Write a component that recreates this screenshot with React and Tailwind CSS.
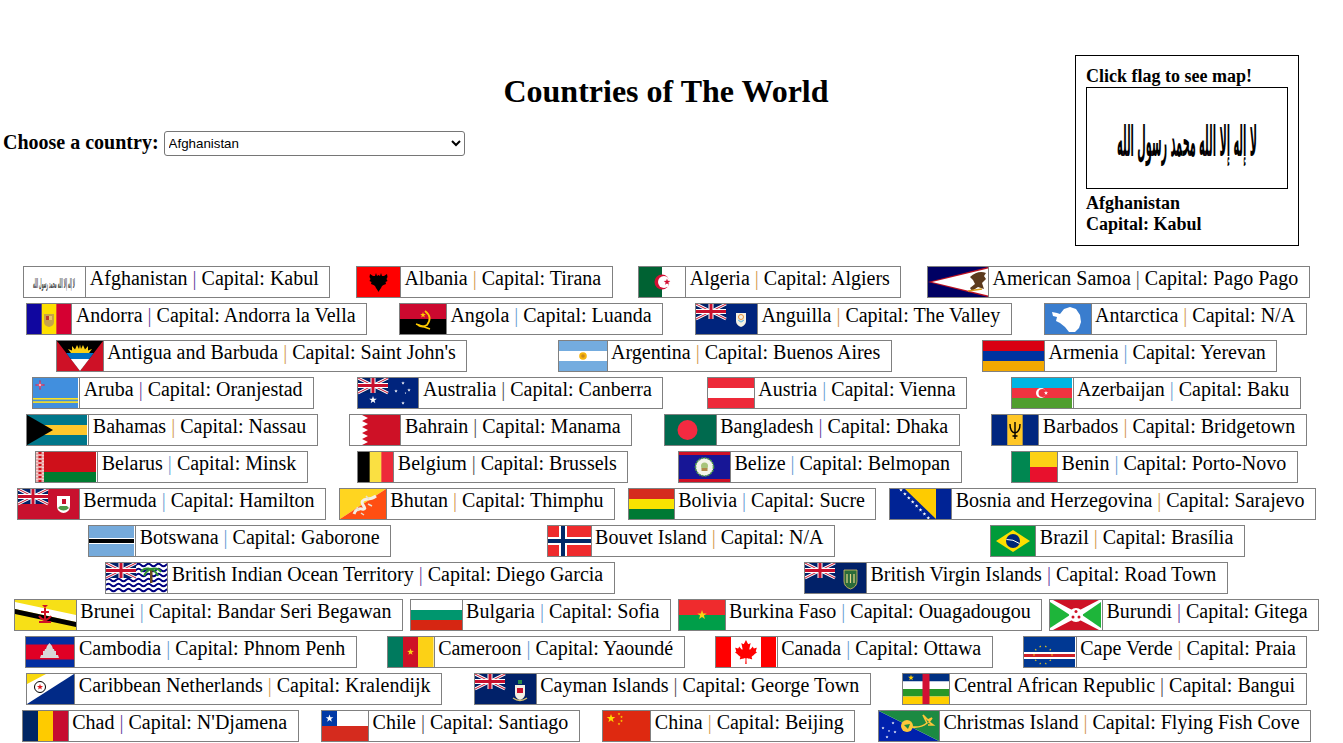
import React from "react";
import { FaCanadianMapleLeaf } from "react-icons/fa";

// =========================
// Flag helpers
// =========================
const Star = ({ x, y, r, fill = "#fff" }) => {
  const pts = [];
  for (let i = 0; i < 10; i++) {
    const rad = i % 2 === 0 ? r : r * 0.4;
    const a = (Math.PI / 5) * i - Math.PI / 2;
    pts.push(`${x + rad * Math.cos(a)},${y + rad * Math.sin(a)}`);
  }
  return <polygon points={pts.join(" ")} fill={fill} />;
};

const Jack = () => (
  <g>
    <rect width="30" height="15" fill="#012169" />
    <path d="M0 0L30 15M30 0L0 15" stroke="#fff" strokeWidth="3" />
    <path d="M0 0L30 15M30 0L0 15" stroke="#c8102e" strokeWidth="1" />
    <path d="M15 0V15M0 7.5H30" stroke="#fff" strokeWidth="5" />
    <path d="M15 0V15M0 7.5H30" stroke="#c8102e" strokeWidth="3" />
  </g>
);

const Stripes = ({ w, colors }) => (
  <>
    {colors.map((c, i) => (
      <rect key={i} y={(30 / colors.length) * i} width={w} height={30 / colors.length} fill={c} />
    ))}
  </>
);

const Bars = ({ colors, w }) => (
  <>
    {colors.map((c, i) => (
      <rect key={i} x={(w / colors.length) * i} width={w / colors.length + 0.5} height="30" fill={c} />
    ))}
  </>
);

const Shahada = () => (
  <text
    x="30"
    y="20.5"
    fontFamily="'DejaVu Sans', sans-serif"
    fontWeight="700"
    fontSize="12.5"
    textAnchor="middle"
    textLength="42"
    lengthAdjust="spacingAndGlyphs"
    fill="#000"
  >
    لا إله إلا الله محمد رسول الله
  </text>
);

// =========================
// Country data: name, capital, flag width, separator tint, art
// =========================
const P = "#6b4aa0";
const O = "#d49a55";
const B = "#6f9fd4";
const K = "#555555";

const countries = [
  { name: "Afghanistan", cap: "Kabul", w: 61, sep: P, art: <g opacity="0.75"><rect width="61" height="30" fill="#fff" /><Shahada /></g> },
  {
    name: "Albania", cap: "Tirana", w: 43, sep: O,
    art: (
      <>
        <rect width="43" height="30" fill="#ff0000" />
        <path d="M19 6L20 9L21.5 8L23 9L24 6L25 9L27 9L30 7L30.5 10L29.5 12L30.5 14L28.5 15L29 17L26.5 18L25 19L24 21L22 24L21.5 25L21 24L19 21L18 19L16.5 18L14 17L14.5 15L12.5 14L13.5 12L12.5 10L13 7L16 9L18 9Z" fill="#000" />
      </>
    ),
  },
  {
    name: "Algeria", cap: "Algiers", w: 46, sep: O,
    art: (
      <>
        <rect width="46" height="30" fill="#fff" />
        <rect width="23" height="30" fill="#006233" />
        <circle cx="23" cy="15" r="7.5" fill="#d21034" />
        <circle cx="25" cy="15" r="6" fill="#fff" />
        <Star x={28} y={15} r={3.5} fill="#d21034" />
      </>
    ),
  },
  {
    name: "American Samoa", cap: "Pago Pago", w: 60, sep: K,
    art: (
      <>
        <rect width="60" height="30" fill="#000063" />
        <polygon points="0,15 60,0 60,30" fill="#bd1021" />
        <polygon points="4,15 60,1.5 60,28.5" fill="#fff" />
        <path d="M42 10Q50 3 58 6L56 9L58 12L54 16L56 22L50 20L44 24L42 21L47 17L45 13Z" fill="#5c3a1e" />
        <path d="M40 24L54 22" stroke="#d8a020" strokeWidth="1.5" />
      </>
    ),
  },
  {
    name: "Andorra", cap: "Andorra la Vella", w: 44, sep: P,
    art: (
      <>
        <Bars w={44} colors={["#10069f", "#fedf00", "#d50032"]} />
        <path d="M17 10H27V18Q27 22 22 23Q17 22 17 18Z" fill="#c7a24a" />
        <rect x="19" y="12" width="3" height="4" fill="#c0392b" />
        <rect x="22" y="12" width="3" height="4" fill="#e8c86a" />
      </>
    ),
  },
  {
    name: "Angola", cap: "Luanda", w: 46, sep: B,
    art: (
      <>
        <rect width="46" height="15" fill="#cc092f" />
        <rect y="15" width="46" height="15" fill="#000" />
        <path d="M25 7Q33 13 27 21Q22 24 18 21" stroke="#ffcb00" strokeWidth="1.8" fill="none" />
        <path d="M16 20L30 25" stroke="#ffcb00" strokeWidth="1.4" />
        <Star x={23} y={11} r={3} fill="#ffcb00" />
      </>
    ),
  },
  {
    name: "Anguilla", cap: "The Valley", w: 61, sep: O,
    art: (
      <>
        <rect width="61" height="30" fill="#00247d" />
        <Jack />
        <path d="M40 9H50V17Q50 21 45 23Q40 21 40 17Z" fill="#f4f1e4" />
        <path d="M42 16Q45 20 48 16Q45 19 42 16Z" fill="#7fc4e8" stroke="#7fc4e8" />
        <circle cx="45" cy="13" r="2.5" fill="none" stroke="#e8923c" />
      </>
    ),
  },
  {
    name: "Antarctica", cap: "N/A", w: 46, sep: O,
    art: (
      <>
        <rect width="46" height="30" fill="#3a7dce" />
        <path d="M7 8L12 9L15 10L19 5L25 3L31 5L35 11L36 18L34 24L30 28L24 28L20 23L15 19L11 17L12 13L8 12Z" fill="#fff" />
      </>
    ),
  },
  {
    name: "Antigua and Barbuda", cap: "Saint John's", w: 46, sep: O,
    art: (
      <>
        <rect width="46" height="30" fill="#ce1126" />
        <polygon points="0,0 46,0 23,30" fill="#000" />
        <path d="M14 12L11 8L15 9.5L15 5L18 8.5L20 4L22 8L23 3.5L24 8L26 4L28 8.5L31 5L31 9.5L35 8L32 12Z" fill="#fcd116" />
        <polygon points="9.2,12 36.8,12 32.2,18 13.8,18" fill="#0072c6" />
        <polygon points="13.8,18 32.2,18 23,30" fill="#fff" />
      </>
    ),
  },
  {
    name: "Argentina", cap: "Buenos Aires", w: 48, sep: O,
    art: (
      <>
        <Stripes w={48} colors={["#74acdf", "#fff", "#74acdf"]} />
        <circle cx="24" cy="15" r="3.8" fill="#f6b40e" />
        <circle cx="24" cy="15" r="1.8" fill="#c98a1c" />
      </>
    ),
  },
  { name: "Armenia", cap: "Yerevan", w: 61, sep: B, art: <Stripes w={61} colors={["#d90012", "#0033a0", "#f2a800"]} /> },
  {
    name: "Aruba", cap: "Oranjestad", w: 46, sep: P,
    art: (
      <>
        <rect width="46" height="30" fill="#fff" />
        <rect width="45" height="30" fill="#418fde" />
        <rect y="20" width="45" height="1.6" fill="#fbe122" />
        <rect y="23.3" width="45" height="1.6" fill="#fbe122" />
        <path d="M7 2.5L7.7 6.3L11.5 7L7.7 7.7L7 11.5L6.3 7.7L2.5 7L6.3 6.3Z" fill="#fff" stroke="#e4002b" strokeWidth="0.6" />
      </>
    ),
  },
  {
    name: "Australia", cap: "Canberra", w: 60, sep: K,
    art: (
      <>
        <rect width="60" height="30" fill="#00247d" />
        <Jack />
        <Star x={15} y={22} r={4} />
        <Star x={45} y={5} r={1.8} />
        <Star x={51} y={12} r={1.8} />
        <Star x={38} y={13} r={1.8} />
        <Star x={45} y={25} r={1.8} />
        <Star x={47.5} y={15} r={1} />
      </>
    ),
  },
  { name: "Austria", cap: "Vienna", w: 46, sep: B, art: <Stripes w={46} colors={["#ed2939", "#fff", "#ed2939"]} /> },
  {
    name: "Azerbaijan", cap: "Baku", w: 61, sep: B,
    art: (
      <>
        <rect width="61" height="30" fill="#fff" />
        <Stripes w={60} colors={["#00b5e2", "#ef3340", "#509e2f"]} />
        <rect x="60" width="1" height="30" fill="#fff" />
        <circle cx="29" cy="15" r="5" fill="#fff" />
        <circle cx="30.5" cy="15" r="4" fill="#ef3340" />
        <Star x={34} y={15} r={2.2} />
      </>
    ),
  },
  {
    name: "Bahamas", cap: "Nassau", w: 61, sep: O,
    art: (
      <>
        <rect width="61" height="30" fill="#fff" />
        <Stripes w={60} colors={["#00778b", "#ffc72c", "#00778b"]} />
        <rect x="60" width="1" height="30" fill="#fff" />
        <polygon points="0,0 26,15 0,30" fill="#000" />
      </>
    ),
  },
  {
    name: "Bahrain", cap: "Manama", w: 50, sep: K,
    art: (
      <>
        <rect width="50" height="30" fill="#fff" />
        <polygon points="50,0 12,0 18,3 12,6 18,9 12,12 18,15 12,18 18,21 12,24 18,27 12,30 50,30" fill="#ce1126" />
      </>
    ),
  },
  {
    name: "Bangladesh", cap: "Dhaka", w: 51, sep: P,
    art: (
      <>
        <rect width="51" height="30" fill="#006a4e" />
        <circle cx="22.5" cy="15" r="10" fill="#f42a41" />
      </>
    ),
  },
  {
    name: "Barbados", cap: "Bridgetown", w: 46, sep: O,
    art: (
      <>
        <Bars w={46} colors={["#00267f", "#ffc726", "#00267f"]} />
        <path d="M18 9Q18 17 23 18Q28 17 28 9M23 7V24M20.5 21H25.5" stroke="#000" strokeWidth="1.4" fill="none" />
      </>
    ),
  },
  {
    name: "Belarus", cap: "Minsk", w: 61, sep: B,
    art: (
      <>
        <rect width="61" height="30" fill="#fff" />
        <rect x="8" width="52" height="20" fill="#cf101a" />
        <rect x="8" y="20" width="52" height="10" fill="#007c30" />
        <rect width="8" height="30" fill="#e9a7a7" />
        <path d="M4 0V30" stroke="#cf101a" strokeWidth="3" strokeDasharray="2 2" />
        <path d="M1 0V30M7 0V30" stroke="#fff" strokeWidth="1" strokeDasharray="1 2" />
      </>
    ),
  },
  { name: "Belgium", cap: "Brussels", w: 35, sep: K, art: <Bars w={35} colors={["#000", "#fae042", "#ed2939"]} /> },
  {
    name: "Belize", cap: "Belmopan", w: 51, sep: B,
    art: (
      <>
        <rect width="51" height="30" fill="#ce1126" />
        <rect y="3" width="51" height="24" fill="#171696" />
        <circle cx="25.5" cy="15" r="9" fill="#f4f4ea" />
        <circle cx="25.5" cy="15" r="9" fill="none" stroke="#4f9a4a" strokeWidth="1.6" strokeDasharray="2 1" />
        <circle cx="25.5" cy="14" r="3.5" fill="#a8c47a" />
        <rect x="22.5" y="16" width="6" height="3" fill="#b0894a" />
      </>
    ),
  },
  {
    name: "Benin", cap: "Porto-Novo", w: 45, sep: B,
    art: (
      <>
        <rect width="18" height="30" fill="#008751" />
        <rect x="18" width="27" height="15" fill="#fcd116" />
        <rect x="18" y="15" width="27" height="15" fill="#e8112d" />
      </>
    ),
  },
  {
    name: "Bermuda", cap: "Hamilton", w: 61, sep: B,
    art: (
      <>
        <rect width="61" height="30" fill="#c8102e" />
        <Jack />
        <path d="M39 7H52V17Q52 23 45.5 24Q39 23 39 17Z" fill="#fff" />
        <rect x="44" y="10" width="4" height="5" fill="#c8102e" />
        <path d="M40 19Q45.5 24 51 19L49 17H42Z" fill="#4f9a4a" />
      </>
    ),
  },
  {
    name: "Bhutan", cap: "Thimphu", w: 46, sep: O,
    art: (
      <>
        <polygon points="0,0 46,0 0,30" fill="#ffd520" />
        <polygon points="46,0 46,30 0,30" fill="#ff4e12" />
        <path d="M14 25Q16 19 22 20Q27 21 23 16Q20 11 27 10Q32 10 36 7" stroke="#f4efe6" strokeWidth="3" fill="none" />
        <path d="M17 18L19 22M28 15L32 17M26 7L29 10M21 24L24 26" stroke="#e8e0d0" strokeWidth="1.5" />
      </>
    ),
  },
  { name: "Bolivia", cap: "Sucre", w: 45, sep: B, art: <Stripes w={45} colors={["#d52b1e", "#f9e300", "#007934"]} /> },
  {
    name: "Bosnia and Herzegovina", cap: "Sarajevo", w: 61, sep: O,
    art: (
      <>
        <rect width="61" height="30" fill="#002395" />
        <polygon points="15,0 46,0 46,30" fill="#fecb00" />
        {[0, 1, 2, 3, 4, 5, 6, 7].map((i) => (
          <Star key={i} x={11 + i * 3.9} y={1 + i * 4} r={2} />
        ))}
      </>
    ),
  },
  {
    name: "Botswana", cap: "Gaborone", w: 46, sep: B,
    art: (
      <>
        <rect width="46" height="30" fill="#fff" />
        <rect width="45" height="30" fill="#75aadb" />
        <rect y="12" width="45" height="6" fill="#fff" />
        <rect y="13" width="45" height="4" fill="#000" />
      </>
    ),
  },
  {
    name: "Bouvet Island", cap: "N/A", w: 43, sep: O,
    art: (
      <>
        <rect width="43" height="30" fill="#ef2b2d" />
        <rect x="11" width="8" height="30" fill="#fff" />
        <rect y="11" width="43" height="8" fill="#fff" />
        <rect x="13" width="4" height="30" fill="#002868" />
        <rect y="13" width="43" height="4" fill="#002868" />
      </>
    ),
  },
  {
    name: "Brazil", cap: "Brasília", w: 44, sep: O,
    art: (
      <>
        <rect width="44" height="30" fill="#009b3a" />
        <polygon points="22,4 39,15 22,26 5,15" fill="#fedf00" />
        <circle cx="22" cy="15" r="7" fill="#002776" />
        <path d="M15.5 13.5Q22 13 28.5 17.5" stroke="#fff" strokeWidth="1" fill="none" />
      </>
    ),
  },
  {
    name: "British Indian Ocean Territory", cap: "Diego Garcia", w: 61, sep: P,
    art: (
      <>
        <rect width="61" height="30" fill="#fff" />
        {[2, 7, 12, 17, 22, 27].map((y) => (
          <path key={y} d={`M0 ${y}q2.5 -2.5 5 0t5 0t5 0t5 0t5 0t5 0t5 0t5 0t5 0t5 0t5 0t5 0t5 0`} stroke="#000080" strokeWidth="1.8" fill="none" />
        ))}
        <Jack />
        <rect x="44" y="6" width="2.5" height="14" fill="#6b4a20" />
        <path d="M45 6Q38 4 35 9M45 6Q52 4 55 9M45 6Q40 8 38 13M45 6Q50 8 52 13" stroke="#2f8f2f" strokeWidth="2" fill="none" />
      </>
    ),
  },
  {
    name: "British Virgin Islands", cap: "Road Town", w: 61, sep: P,
    art: (
      <>
        <rect width="61" height="30" fill="#012169" />
        <Jack />
        <path d="M39 7H52V18Q52 24 45.5 26Q39 24 39 18Z" fill="#2a6b3a" stroke="#e0c060" strokeWidth="0.8" />
        <path d="M42 11V20M45.5 11V20M49 11V20" stroke="#e8d48a" strokeWidth="1.2" />
      </>
    ),
  },
  {
    name: "Brunei", cap: "Bandar Seri Begawan", w: 61, sep: B,
    art: (
      <>
        <rect width="61" height="30" fill="#f7e017" />
        <polygon points="0,2 0,9 61,22 61,15" fill="#fff" />
        <polygon points="0,9 0,14 61,27 61,22" fill="#000" />
        <path d="M24 16Q30 24 36 16M30 8V22M26 12H34M24 22H36" stroke="#cf1126" strokeWidth="2" fill="none" />
        <path d="M27 5L30 8L33 5Z" fill="#cf1126" />
      </>
    ),
  },
  { name: "Bulgaria", cap: "Sofia", w: 51, sep: B, art: <Stripes w={51} colors={["#fff", "#00966e", "#d62612"]} /> },
  {
    name: "Burkina Faso", cap: "Ouagadougou", w: 46, sep: B,
    art: (
      <>
        <rect width="46" height="15" fill="#ef2b2d" />
        <rect y="15" width="46" height="15" fill="#009e49" />
        <Star x={23} y={15} r={5} fill="#fcd116" />
      </>
    ),
  },
  {
    name: "Burundi", cap: "Gitega", w: 52, sep: P,
    art: (
      <>
        <rect width="52" height="30" fill="#fff" />
        <polygon points="3,0 49,0 26,12" fill="#ce1126" />
        <polygon points="3,30 49,30 26,18" fill="#ce1126" />
        <polygon points="0,2 0,28 20,15" fill="#1eb53a" />
        <polygon points="51,2 51,28 32,15" fill="#1eb53a" />
        <circle cx="26" cy="15" r="7" fill="#fff" />
        <circle cx="26" cy="11.5" r="1.5" fill="#ce1126" />
        <circle cx="23" cy="17" r="1.5" fill="#ce1126" />
        <circle cx="29" cy="17" r="1.5" fill="#ce1126" />
      </>
    ),
  },
  {
    name: "Cambodia", cap: "Phnom Penh", w: 48, sep: B,
    art: (
      <>
        <rect width="48" height="30" fill="#032ea1" />
        <rect y="7.5" width="48" height="15" fill="#e00025" />
        <path d="M14 21L15 18H17L17 14H18.5L19 12H20L21 9L23.5 6L26 9L27 12H28L28.5 14H30L30 18H32L33 21Z" fill="#d8d8d8" />
      </>
    ),
  },
  {
    name: "Cameroon", cap: "Yaoundé", w: 46, sep: B,
    art: (
      <>
        <rect width="46" height="30" fill="#fff" />
        <Bars w={45} colors={["#007a5e", "#ce1126", "#fcd116"]} />
        <Star x={22.5} y={15} r={3.5} fill="#fcd116" />
      </>
    ),
  },
  {
    name: "Canada", cap: "Ottawa", w: 61, sep: B,
    art: (
      <>
        <rect width="61" height="30" fill="#fff" />
        <rect width="15" height="30" fill="#ff0000" />
        <rect x="45" width="15" height="30" fill="#ff0000" />
        <FaCanadianMapleLeaf x={18} y={3} size={24} color="#ff0000" />
      </>
    ),
  },
  {
    name: "Cape Verde", cap: "Praia", w: 52, sep: O,
    art: (
      <>
        <rect width="52" height="30" fill="#003893" />
        <rect y="15" width="52" height="7" fill="#fff" />
        <rect y="17" width="52" height="3" fill="#cf2027" />
        {[...Array(10)].map((_, i) => (
          <Star
            key={i}
            x={19 + 9 * Math.cos((i * Math.PI) / 5)}
            y={18 + 9 * Math.sin((i * Math.PI) / 5)}
            r={1.2}
            fill="#f7d116"
          />
        ))}
        <rect x="51" width="1" height="30" fill="#fff" />
      </>
    ),
  },
  {
    name: "Caribbean Netherlands", cap: "Kralendijk", w: 47, sep: O,
    art: (
      <>
        <rect width="47" height="30" fill="#fff" />
        <polygon points="0,0 19,0 0,10" fill="#f9d90f" />
        <polygon points="47,0 47,30 0,30" fill="#012a87" />
        <circle cx="13" cy="13" r="5.5" fill="#fff" stroke="#000" />
        <Star x={13} y={13} r={3.2} fill="#dc171d" />
      </>
    ),
  },
  {
    name: "Cayman Islands", cap: "George Town", w: 61, sep: K,
    art: (
      <>
        <rect width="61" height="30" fill="#012169" />
        <Jack />
        <path d="M40 11H50V20Q50 24 45 26Q40 24 40 20Z" fill="#f4f1e4" />
        <rect x="42" y="14" width="6" height="5" fill="#c8102e" />
        <path d="M43 6H47V10H43Z" fill="#2a8a4a" />
        <path d="M38 24Q45 29 52 24" stroke="#d8c070" strokeWidth="1.5" fill="none" />
      </>
    ),
  },
  {
    name: "Central African Republic", cap: "Bangui", w: 46, sep: K,
    art: (
      <>
        <rect width="46" height="7.5" fill="#003082" />
        <rect y="7.5" width="46" height="7.5" fill="#fff" />
        <rect y="15" width="46" height="7.5" fill="#289728" />
        <rect y="22.5" width="46" height="7.5" fill="#ffce00" />
        <rect x="19.5" width="7" height="30" fill="#d21034" />
        <Star x={8} y={3.8} r={3} fill="#ffce00" />
      </>
    ),
  },
  { name: "Chad", cap: "N'Djamena", w: 45, sep: P, art: <Bars w={45} colors={["#002664", "#fecb00", "#c60c30"]} /> },
  {
    name: "Chile", cap: "Santiago", w: 46, sep: K,
    art: (
      <>
        <rect width="46" height="15" fill="#fff" />
        <rect y="15" width="46" height="15" fill="#d52b1e" />
        <rect width="15" height="15" fill="#0039a6" />
        <Star x={7.5} y={7.5} r={4} />
      </>
    ),
  },
  {
    name: "China", cap: "Beijing", w: 47, sep: O,
    art: (
      <>
        <rect width="47" height="30" fill="#de2910" />
        <Star x={8} y={7.5} r={4.5} fill="#ffde00" />
        <Star x={16} y={3} r={1.4} fill="#ffde00" />
        <Star x={18.5} y={6} r={1.4} fill="#ffde00" />
        <Star x={18.5} y={10} r={1.4} fill="#ffde00" />
        <Star x={16} y={13} r={1.4} fill="#ffde00" />
      </>
    ),
  },
  {
    name: "Christmas Island", cap: "Flying Fish Cove", w: 60, sep: O,
    art: (
      <>
        <polygon points="0,0 60,30 0,30" fill="#0021ad" />
        <polygon points="0,0 60,0 60,30" fill="#1c8a42" />
        <circle cx="28" cy="15" r="6" fill="#ffc639" />
        <path d="M25 14L31 13L29 18Z" fill="#1c8a42" />
        <path d="M33 16Q42 17 48 12L44 4L49 9L53 7L50 11L54 14L49 14" stroke="#ffc639" strokeWidth="1.6" fill="none" />
        <Star x={4} y={17} r={1.6} />
        <Star x={14} y={12} r={1.6} />
        <Star x={10} y={20} r={1.2} />
        <Star x={16} y={21} r={1.6} />
        <Star x={8} y={26} r={1.6} />
      </>
    ),
  },
];

const CountryCard = ({ name, cap, w, sep, art }) => (
  <div className="flex h-8 border border-[#808080] bg-white">
    <div className="border-r border-[#808080]">
      <svg width={w} height="30" viewBox={`0 0 ${w} 30`} className="block">
        {art}
      </svg>
    </div>
    <div className="pl-[3.5px] pr-[10.5px] text-[20px] leading-[23px] whitespace-nowrap text-black">
      {name} <span style={{ color: sep }}>|</span> Capital: {cap}
    </div>
  </div>
);

export default function App() {
  return (
    <div className="min-h-[743px] bg-white font-['Liberation_Serif',serif] text-black">
      {/* ================= HEADER ================= */}
      <div className="grid">
        <div className="col-start-1 row-start-1">
          <h1 className="pt-[73px] pl-[10px] pr-[21px] text-center text-[32px] leading-[37px] font-bold">
            Countries of The World
          </h1>
          <div className="mt-[21px] flex items-center gap-[5px] pl-[3px]">
            <label className="pb-[2px] text-[20px] leading-[23px] font-bold">Choose a country:</label>
            <select
              defaultValue="Afghanistan"
              className="h-[25px] w-[301px] rounded-[3px] border border-[#767676] bg-white font-['Liberation_Sans',sans-serif] text-[13.33px]"
            >
              {countries.map((c) => (
                <option key={c.name}>{c.name}</option>
              ))}
            </select>
          </div>
        </div>

        <div className="col-start-1 row-start-1 mt-[55px] mr-[44px] mb-[20px] w-[224px] justify-self-end border border-black p-[10px] text-[18px] leading-[21px] font-bold">
          <div>Click flag to see map!</div>
          <div className="h-[102px] w-[202px] border border-black">
            <svg width="200" height="100" viewBox="0 0 60 30" className="block">
              <Shahada />
            </svg>
          </div>
          <div className="mt-1">Afghanistan</div>
          <div>Capital: Kabul</div>
        </div>
      </div>

      {/* ================= COUNTRY LIST ================= */}
      <div className="flex flex-wrap justify-around gap-y-[5px] pl-[10.5px] pr-[20.5px]">
        {countries.map((c) => (
          <CountryCard key={c.name} {...c} />
        ))}
      </div>
    </div>
  );
}
